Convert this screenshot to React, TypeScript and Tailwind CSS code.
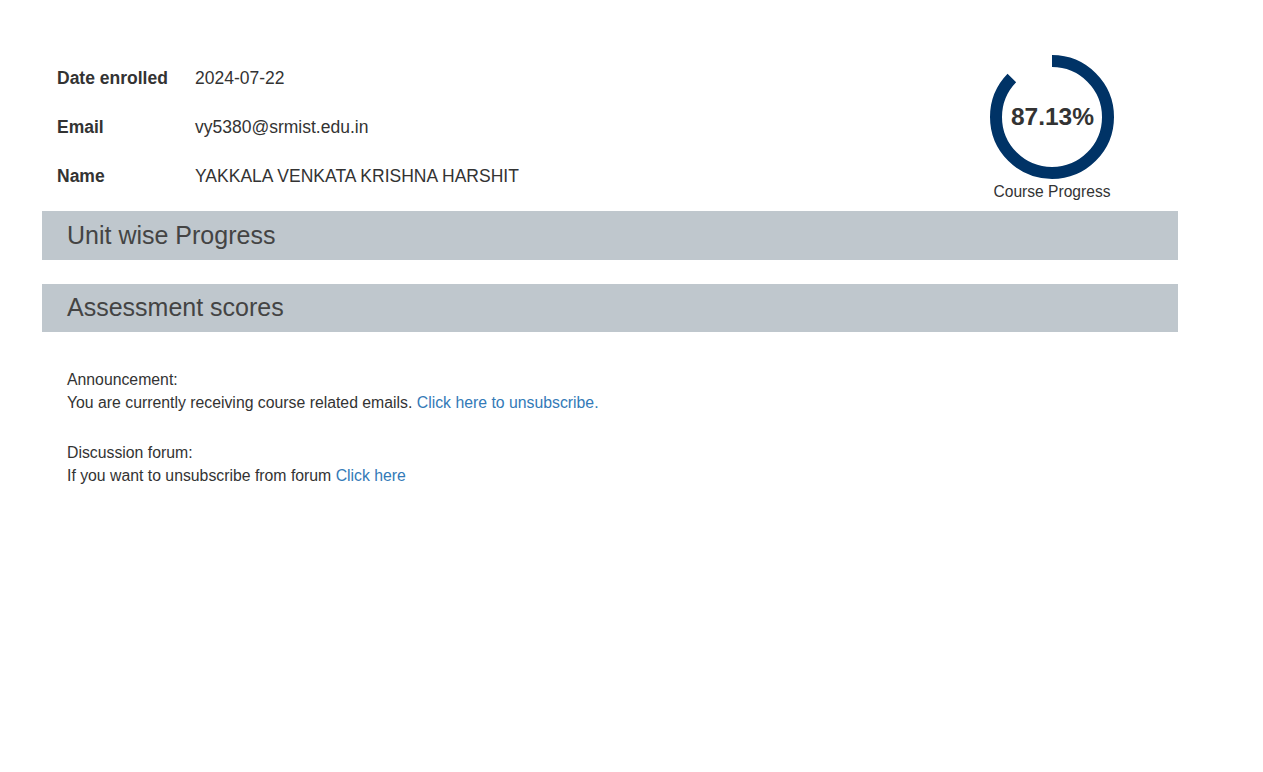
import React from 'react';

const ProgressRing: React.FC<{ value: number }> = ({ value }) => {
  const r = 56;
  const c = 2 * Math.PI * r;
  return (
    <div className="flex flex-col items-center w-[124px]">
      <div className="relative w-[124px] h-[124px]">
        <svg width="124" height="124" viewBox="0 0 124 124" className="-rotate-90">
          <circle
            cx="62"
            cy="62"
            r={r}
            fill="none"
            stroke="#003366"
            strokeWidth="12"
            strokeDasharray={`${(c * value) / 100} ${c}`}
          />
        </svg>
        <div className="absolute inset-0 flex items-center justify-center pl-[1px] text-[24.5px] font-bold text-[#333]">
          {value}%
        </div>
      </div>
      <div className="mt-[1px] text-[15.6px] text-[#333] whitespace-nowrap">Course Progress</div>
    </div>
  );
};

const App: React.FC = () => {
  const rows = [
    ['Date enrolled', '2024-07-22'],
    ['Email', 'vy5380@srmist.edu.in'],
    ['Name', 'YAKKALA VENKATA KRISHNA HARSHIT'],
  ];
  return (
    <div className="min-h-screen bg-white font-['Liberation_Sans',Arial,sans-serif] text-[#333]">
      <div className="w-[1136px] ml-[42px] pt-[55px]">
        <div className="flex justify-between h-[156px]">
          <div className="pt-[11px] pl-[15px]">
            {rows.map(([k, v]) => (
              <div key={k} className="flex h-[49px] text-[17.5px] leading-[24px]">
                <div className="w-[138px] font-bold">{k}</div>
                <div>{v}</div>
              </div>
            ))}
          </div>
          <div className="mr-[64px]">
            <ProgressRing value={87.13} />
          </div>
        </div>

        <div className="h-[49px] bg-[#bfc7cd] flex items-center px-[25px] text-[25px] text-[#444]">
          Unit wise Progress
        </div>
        <div className="mt-[24px] h-[48px] bg-[#bfc7cd] flex items-center px-[25px] text-[25px] text-[#444]">
          Assessment scores
        </div>

        <div className="mt-[36px] pl-[25px] text-[15.8px] leading-[23px]">
          <div>Announcement:</div>
          <div>
            You are currently receiving course related emails.{' '}
            <a href="#" className="text-[#337ab7]">Click here to unsubscribe.</a>
          </div>
          <div className="mt-[27px]">Discussion forum:</div>
          <div>
            If you want to unsubscribe from forum{' '}
            <a href="#" className="text-[#337ab7]">Click here</a>
          </div>
        </div>
      </div>
    </div>
  );
};

export default App;
